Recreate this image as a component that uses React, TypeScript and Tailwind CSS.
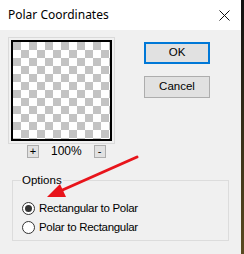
import React from 'react';

const sans = { fontFamily: '"Liberation Sans", Arial, sans-serif' };

const Radio: React.FC<{ label: string; checked?: boolean }> = ({ label, checked }) => (
  <div className="flex items-center h-[19px]">
    <div className="w-[13px] h-[13px] rounded-full border border-[#333] bg-white flex items-center justify-center">
      {checked && <div className="w-[7px] h-[7px] rounded-full bg-[#333]" />}
    </div>
    <span className="ml-[4px] text-[11.5px] text-black leading-none tracking-[-0.3px]">{label}</span>
  </div>
);

export default function App() {
  return (
    <div className="relative w-[244px] h-[254px] flex overflow-hidden" style={sans}>
      <div className="w-[241px] h-full flex flex-col bg-[#f0f0f0]">
        {/* title bar */}
        <div className="h-[30px] bg-white flex items-center justify-between pl-[8px] pr-[11px]">
          <span className="text-[12px] text-black" style={{ fontFamily: '"Noto Sans", "Liberation Sans", sans-serif' }}>
            Polar Coordinates
          </span>
          <svg width="11" height="11" viewBox="0 0 11 11">
            <path d="M0.5 0.5L10.5 10.5M10.5 0.5L0.5 10.5" stroke="#111" strokeWidth="1" />
          </svg>
        </div>

        {/* preview + buttons */}
        <div className="flex pt-[7px] pl-[8px]">
          <div className="flex flex-col">
            <div className="w-[107px] h-[107px] border border-[#dadada] p-[2px]">
              <div className="w-full h-full border-2 border-black bg-[conic-gradient(#fff_25%,#c3c3c3_0_50%,#fff_0_75%,#c3c3c3_0)] bg-[length:16px_16px]" />
            </div>
            <div className="flex items-center h-[14px] pl-[19px]">
              <div className="w-[12px] h-[13px] bg-[#e1e1e1] border border-[#adadad] flex items-center justify-center text-[11px] leading-none text-black">+</div>
              <span className="ml-[12px] text-[12px] text-black leading-none">100%</span>
              <div className="ml-[12px] w-[12px] h-[13px] bg-[#e1e1e1] border border-[#adadad] flex items-center justify-center text-[11px] leading-none text-black">-</div>
            </div>
          </div>
          <div className="flex flex-col ml-[29px] pt-[5px] gap-[12px]">
            <div className="w-[66px] h-[22px] bg-[#e1e1e1] border-2 border-[#0078d7] flex items-center justify-center text-[11.5px] text-black">
              OK
            </div>
            <div className="w-[66px] h-[22px] bg-[#e1e1e1] border border-[#adadad] flex items-center justify-center text-[11.5px] text-black">
              Cancel
            </div>
          </div>
        </div>

        {/* options group */}
        <fieldset className="ml-[12px] mt-[16px] w-[217px] h-[67px] border border-[#dcdcdc] pl-[9px] pt-[12px]">
          <legend className="px-[1px] -ml-[1px] text-[11.5px] text-black leading-[13px]">Options</legend>
          <div className="flex flex-col">
            <Radio label="Rectangular to Polar" checked />
            <Radio label="Polar to Rectangular" />
          </div>
        </fieldset>
      </div>
      <div className="w-[3px] h-full bg-[linear-gradient(#111,#5a4a20)]" />

      {/* red annotation arrow */}
      <svg className="absolute left-0 top-0 pointer-events-none" width="244" height="254">
        <line x1="137" y1="157" x2="58" y2="192" stroke="#e8141b" strokeWidth="3" strokeLinecap="round" />
        <polygon points="47,197 66,197 60,184" fill="#e8141b" />
      </svg>
    </div>
  );
}
